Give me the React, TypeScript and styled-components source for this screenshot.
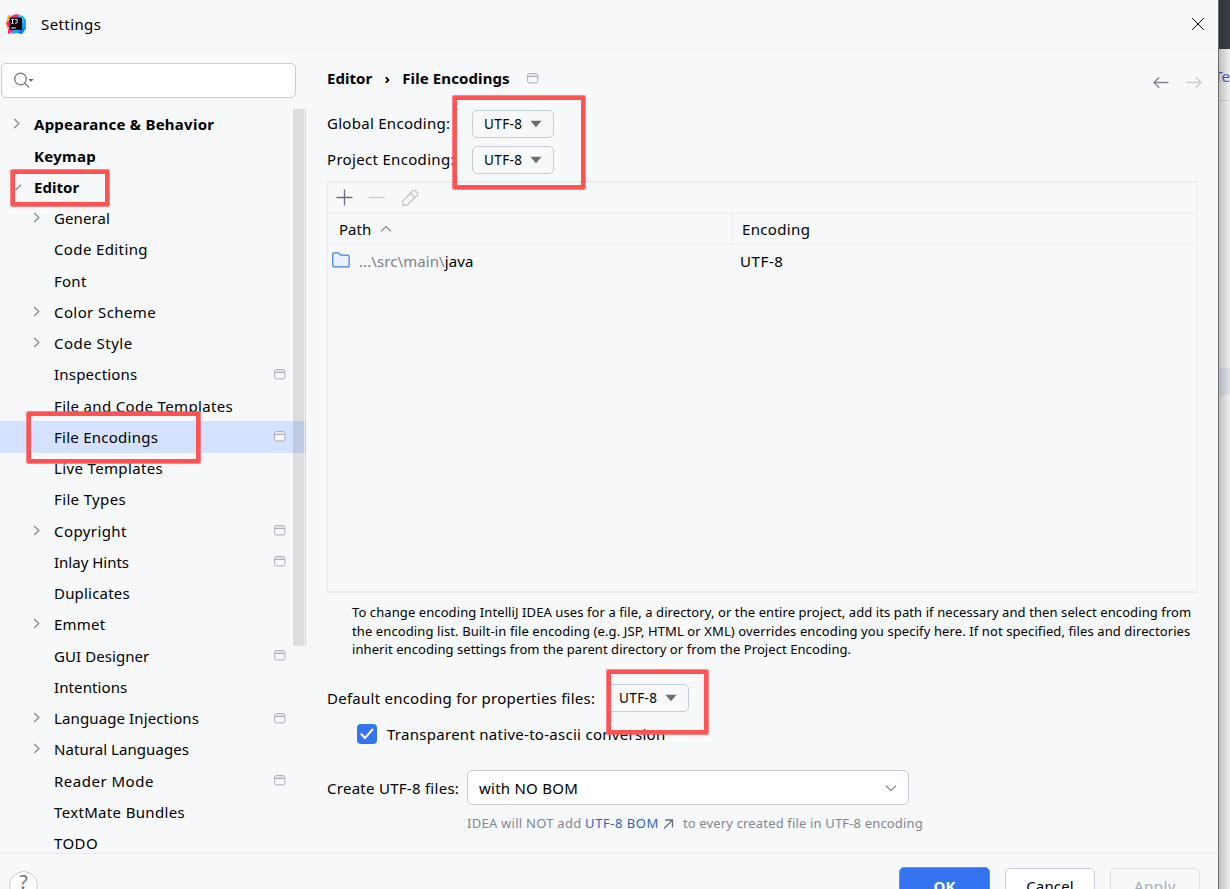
import React from 'react';
import styled, { createGlobalStyle } from 'styled-components';

const GlobalStyle = createGlobalStyle`
  *, *::before, *::after { box-sizing: border-box; }
  body { margin: 0; overflow: hidden; background: #f2f2f2; }
`;

const Screen = styled.div`
  position: relative;
  display: flex;
  width: 1230px;
  height: 889px;
  overflow: hidden;
  font-family: 'Noto Sans', 'Open Sans', sans-serif;
  font-size: 15px;
  color: #000;
`;

const Dialog = styled.div`
  display: flex;
  flex-direction: column;
  width: 1219px;
  height: 889px;
  flex: none;
  background: #f7f8fa;
  border-right: 1px solid #6c6d6f;
`;

const Text = styled.span<{ $size?: number; $ls?: number; $bold?: boolean; $color?: string }>`
  font-size: ${(p) => p.$size ?? 15}px;
  letter-spacing: ${(p) => p.$ls ?? 0}px;
  font-weight: ${(p) => (p.$bold ? 700 : 400)};
  color: ${(p) => p.$color ?? '#000'};
  line-height: 20px;
  white-space: pre;
`;

const TitleBar = styled.header`
  display: flex;
  align-items: center;
  height: 50px;
  flex: none;
  padding: 0 13px 2px 6px;
  border-bottom: 1px solid #ebecf0;
`;

const TitleText = styled.div`
  flex: 1;
  padding-left: 15px;
`;

const Body = styled.div`
  display: flex;
  height: 803px;
  flex: none;
`;

const Sidebar = styled.aside`
  display: flex;
  flex-direction: column;
  width: 306px;
  flex: none;
  padding-top: 13px;
`;

const SearchBox = styled.div`
  display: flex;
  align-items: center;
  width: 295px;
  height: 35px;
  margin-left: 1px;
  padding: 0 0 1px 12px;
  flex: none;
  background: #fff;
  border: 1px solid #c9ccd6;
  border-radius: 5px;
`;

const TreeArea = styled.div`
  position: relative;
  height: 744px;
  margin-top: 11px;
  overflow: hidden;
`;

const TreeList = styled.div`
  margin-top: -0.2px;
`;

const TreeRow = styled.div<{ $level: number; $selected?: boolean }>`
  display: flex;
  align-items: center;
  height: 31.25px;
  padding: 0 20px 0 ${(p) => 10 + p.$level * 20}px;
  background: ${(p) => (p.$selected ? '#d4e2ff' : 'transparent')};
`;

const Arrow = styled.span`
  display: flex;
  width: 24px;
  flex: none;
`;

const Grow = styled.span`
  flex: 1;
  display: flex;
`;

const ScrollThumb = styled.div`
  position: absolute;
  top: 0;
  right: 0;
  width: 13px;
  height: 537px;
  background: rgba(115, 115, 115, 0.2);
  border-right: 1px solid rgba(90, 90, 90, 0.04);
  box-shadow: inset -1px 0 0 rgba(255, 255, 255, 0.6);
`;

const Content = styled.main`
  display: flex;
  flex-direction: column;
  width: 912px;
  padding: 13px 21px 0 21px;
`;

const Breadcrumb = styled.div`
  display: flex;
  align-items: center;
  height: 32px;
  margin-bottom: 11px;
  flex: none;
`;

const Crumbs = styled.div`
  display: flex;
  align-items: center;
  flex: 1;
  padding-bottom: 2px;
`;

const CrumbIcon = styled.span`
  display: flex;
  padding: 1px 0 0 17px;
`;

const CrumbSeparator = styled.span`
  width: 30px;
  text-align: center;
`;

const NavArrows = styled.div`
  display: flex;
  gap: 17px;
  padding: 6px 0 0;
  margin-right: -5px;
`;

const FieldRow = styled.div<{ $height: number; $indent?: number; $gap?: number }>`
  display: flex;
  align-items: center;
  height: ${(p) => p.$height}px;
  margin-top: ${(p) => p.$gap ?? 0}px;
  padding-left: ${(p) => p.$indent ?? 0}px;
  flex: none;
`;

const FieldLabel = styled.div<{ $width: number; $raise?: number }>`
  width: ${(p) => p.$width}px;
  padding-bottom: ${(p) => p.$raise ?? 0}px;
  flex: none;
`;

const SmallSelect = styled.div`
  display: flex;
  align-items: center;
  gap: 8px;
  width: 81.5px;
  height: 28px;
  padding-left: 11px;
  border: 1px solid #c9ccd6;
  border-radius: 5px;
`;

const TablePanel = styled.section`
  display: flex;
  flex-direction: column;
  width: 871px;
  height: 412px;
  margin-top: 3px;
  flex: none;
  border: 1px solid #ebecf0;
  border-width: 2px 1px;
`;

const TableToolbar = styled.div`
  display: flex;
  align-items: center;
  gap: 16px;
  height: 31px;
  padding: 0 0 2px 8px;
  border-bottom: 1px solid #ebecf0;
`;

const TableHead = styled.div`
  display: flex;
  height: 31px;
  border-bottom: 1px solid #ebecf0;
`;

const HeadCell = styled.div<{ $width?: number; $pad: number }>`
  display: flex;
  align-items: center;
  gap: 9px;
  width: ${(p) => (p.$width ? p.$width + 'px' : 'auto')};
  padding-left: ${(p) => p.$pad}px;
  border-right: ${(p) => (p.$width ? '1px solid #ebecf0' : '0')};
`;

const TableRow = styled.div`
  display: flex;
  align-items: center;
  height: 31px;
  padding-left: 4px;
`;

const PathCell = styled.div`
  display: flex;
  align-items: center;
  width: 408px;
`;

const PathText = styled.div`
  display: flex;
  padding-left: 9px;
`;

const Help = styled.div`
  display: flex;
  flex-direction: column;
  padding: 10px 0 0 25px;
  height: 84px;
  flex: none;
`;

const HelpLine = styled.div`
  height: 18.4px;
  display: flex;
  align-items: center;
`;

const CheckBox = styled.div`
  display: flex;
  align-items: center;
  justify-content: center;
  width: 20px;
  height: 20px;
  margin-right: 10px;
  background: #3574f0;
  border-radius: 4px;
`;

const Combo = styled.div`
  display: flex;
  align-items: center;
  justify-content: space-between;
  width: 441.5px;
  height: 35px;
  margin-bottom: 1px;
  padding: 1px 11px 0;
  background: #fff;
  border: 1px solid #c9ccd6;
  border-radius: 5px;
`;

const Hint = styled.div`
  display: flex;
  align-items: center;
  height: 24px;
  padding-left: 140px;
  flex: none;
`;

const HintIcon = styled.span`
  display: flex;
  width: 24px;
  padding: 1px 0 0 4px;
`;

const Footer = styled.footer`
  display: flex;
  align-items: flex-start;
  gap: 15px;
  height: 60px;
  flex: none;
  padding: 13px 18px 0 9px;
  border-top: 1px solid #ebecf0;
`;

const HelpButton = styled.div`
  display: flex;
  justify-content: center;
  width: 29px;
  height: 29px;
  margin-top: 4px;
  background: #fff;
  border: 1px solid #c9ccd6;
  border-radius: 50%;
`;

const Button = styled.div<{ $kind: 'primary' | 'plain' | 'disabled' }>`
  display: flex;
  align-items: center;
  justify-content: center;
  width: ${(p) => (p.$kind === 'primary' ? 91 : 90)}px;
  height: ${(p) => (p.$kind === 'primary' ? 37 : 35)}px;
  margin-top: ${(p) => (p.$kind === 'primary' ? 0 : 1)}px;
  border-radius: 5px;
  background: ${(p) => ({ primary: '#3574f0', plain: '#fff', disabled: 'transparent' })[p.$kind]};
  border: 1px solid ${(p) => ({ primary: '#5c8ef3', plain: '#c9ccd6', disabled: '#dfe1e5' })[p.$kind]};
`;

const Backdrop = styled.div`
  position: relative;
  display: flex;
  flex-direction: column;
  width: 11px;
  overflow: hidden;
  background: #f5f5f5;
  &::after {
    content: '';
    position: absolute;
    inset: 0;
    background: linear-gradient(to right, rgba(0, 0, 0, 0.22), rgba(0, 0, 0, 0.02));
  }
`;

const BackdropBlock = styled.div<{ $height: number; $color: string }>`
  height: ${(p) => p.$height}px;
  flex: none;
  background: ${(p) => p.$color};
`;

const BackdropTab = styled.div`
  display: flex;
  align-items: center;
  justify-content: flex-end;
  height: 52px;
  padding-top: 3px;
  flex: none;
  border-bottom: 1px solid #d8dae0;
`;

const Highlight = styled.div<{ $x: number; $y: number; $w: number; $h: number }>`
  position: absolute;
  left: ${(p) => p.$x}px;
  top: ${(p) => p.$y}px;
  width: ${(p) => p.$w}px;
  height: ${(p) => p.$h}px;
  border: 4px solid #ff5252;
  border-radius: 1px;
  box-shadow: 0 0 0 1px rgba(255, 82, 82, 0.7);
`;

const Chevron = ({ dir = 'right' }: { dir?: 'right' | 'down' | 'up' }) => {
  const d = { right: 'M4.2 1 8.9 5.5 4.2 10', down: 'M1 3.8 6 8.6 11 3.8', up: 'M1 8.4 6 3.6 11 8.4' }[dir];
  return (
    <svg width="12" height="12" viewBox="0 0 12 12" fill="none" stroke="#818594" strokeWidth="1.2">
      <path d={d} />
    </svg>
  );
};

const ProjectIcon = () => (
  <svg width="12" height="11" viewBox="0 0 12 11" fill="none">
    <rect x="0.6" y="0.6" width="10.3" height="9.3" rx="1.6" fill="#f7f8fa" stroke="#a8adbd" />
    <path d="M1.1 2.2h9.300" stroke="#dfe1e8" strokeWidth="1.8" />
    <path d="M1 3.5h9.5" stroke="#a8adbd" />
  </svg>
);

const AppLogo = () => (
  <svg width="20" height="20" viewBox="0 0 20 20">
    <path d="M1 5 2 1l5 1 2 5-4 6-4 2-1-5z" fill="#ffa84a" />
    <path d="M7 1l5-1 2 5-6 4-5-4z" fill="#f5267f" />
    <path d="M0 9l4-3 4 7-1 5-5 2 0-4 1-2z" fill="#ff2d7a" />
    <path d="M12 1l5 1 3 4v9l-4 5-5-1-5 1 1-5 6-5z" fill="#16a5f5" />
    <path d="M13 0l4 3 1 6-4-2z" fill="#35c4f4" />
    <path d="M15 16l4-4-3 8-4-1z" fill="#1573e6" />
    <path d="M3.6 3.6h12.4v12.4H3.6z" fill="#0b0309" />
    <path d="M5.2 5.5h2.6M6.5 5.5v3.6M5.2 9.2h2.6M9 5.5h2.2v2.6q0 1.1-1.2 1.1H9" stroke="#fff" strokeWidth="0.9" fill="none" />
    <path d="M5.2 14h4.4" stroke="#fff" strokeWidth="1" />
  </svg>
);

const CloseIcon = () => (
  <svg width="14" height="14" viewBox="0 0 14 14" stroke="#000" strokeWidth="1">
    <path d="M1.2 1.2l11.6 11.6M12.8 1.2l-11.6 11.6" />
  </svg>
);

const SearchIcon = () => (
  <svg width="22" height="18" viewBox="0 0 22 18" fill="none" stroke="#6c707e" strokeWidth="1.2">
    <circle cx="6.5" cy="8" r="5.8" />
    <path d="M10.7 12.2 15 16.5" />
    <path d="M14.3 8h5.4L17 11z" fill="#6c707e" stroke="none" />
  </svg>
);

const Triangle = () => (
  <svg width="12" height="8" viewBox="0 0 12 8">
    <path d="M.4.8h11.2L6 7.2z" fill="#6e6e6e" />
  </svg>
);

const NavArrow = ({ forward }: { forward?: boolean }) => (
  <svg width="16" height="13" viewBox="0 0 16 13" fill="none" strokeWidth="1.3" stroke={forward ? '#c8c9ce' : '#818594'}>
    <path d={forward ? 'M.5 6.5H15M9.8 1.3 15 6.5 9.8 11.7' : 'M15.5 6.5H1M6.2 1.3 1 6.5l5.2 5.2'} />
  </svg>
);

const PlusIcon = () => (
  <svg width="17" height="17" viewBox="0 0 17 17" stroke="#6c707e" strokeWidth="1.3">
    <path d="M.5 8.5h16M8.5.5v16" />
  </svg>
);

const MinusIcon = () => (
  <svg width="16" height="17" viewBox="0 0 16 17" stroke="#c9cacf" strokeWidth="1.3">
    <path d="M0 8.5h16" />
  </svg>
);

const PencilIcon = () => (
  <svg width="18" height="17" viewBox="-1 0 18 17" fill="none" stroke="#bcbdc3" strokeWidth="1.2" strokeLinejoin="round">
    <path d="M.8 16.2v-4.4L11 1.6q1.1-1.1 2.2 0L15.4 3.8q1.1 1.1 0 2.2L5.2 16.2zM8.4 4.2l4.4 4.4" />
  </svg>
);

const FolderIcon = () => (
  <svg width="18" height="17" viewBox="0 0 18 17">
    <path
      d="M.7 13V2.6Q.7.8 2.4.8h3.4q.6 0 1 .4L9 3.2h6.3q1.9 0 1.9 1.8v8q0 1.9-1.9 1.9H2.6Q.7 14.9 .7 13z"
      fill="#e9f0ff"
      stroke="#3f7bf1"
      strokeWidth="1.2"
    />
  </svg>
);

const CheckIcon = () => (
  <svg width="14" height="12" viewBox="0 0 14 12" fill="none" stroke="#fff" strokeWidth="2.1" strokeLinecap="round">
    <path d="M1.4 6.2 5 10 12.4 1.6" />
  </svg>
);

const ExternalIcon = () => (
  <svg width="11" height="10" viewBox="0 0 11 10" fill="none" stroke="#6c707e" strokeWidth="1.3">
    <path d="M2 1h7.5v7.5M9.5 1 1 9.5" />
  </svg>
);

type Item = { name: string; level: number; arrow?: 'right' | 'down'; project?: boolean; ls?: number };

const tree: Item[] = [
  { name: 'Appearance & Behavior', level: 0, arrow: 'right', ls: 0.25 },
  { name: 'Keymap', level: 0, ls: 0.3 },
  { name: 'Editor', level: 0, arrow: 'down', ls: 0.05 },
  { name: 'General', level: 1, arrow: 'right', ls: 0.1 },
  { name: 'Code Editing', level: 1, ls: 0.38 },
  { name: 'Font', level: 1, ls: 0.25 },
  { name: 'Color Scheme', level: 1, arrow: 'right', ls: 0.4 },
  { name: 'Code Style', level: 1, arrow: 'right', ls: 0.48 },
  { name: 'Inspections', level: 1, project: true, ls: 0.2 },
  { name: 'File and Code Templates', level: 1, ls: 0.34 },
  { name: 'File Encodings', level: 1, project: true, ls: 0.26 },
  { name: 'Live Templates', level: 1, ls: 0.36 },
  { name: 'File Types', level: 1, ls: 0.36 },
  { name: 'Copyright', level: 1, arrow: 'right', project: true, ls: 0.42 },
  { name: 'Inlay Hints', level: 1, project: true },
  { name: 'Duplicates', level: 1, ls: 0.2 },
  { name: 'Emmet', level: 1, arrow: 'right', ls: 0.2 },
  { name: 'GUI Designer', level: 1, project: true, ls: 0.07 },
  { name: 'Intentions', level: 1, ls: 0.1 },
  { name: 'Language Injections', level: 1, arrow: 'right', project: true, ls: 0.12 },
  { name: 'Natural Languages', level: 1, arrow: 'right', ls: 0.06 },
  { name: 'Reader Mode', level: 1, project: true, ls: 0.5 },
  { name: 'TextMate Bundles', level: 1, ls: 0.34 },
  { name: 'TODO', level: 1, ls: 0.4 },
];

const helpLines = [
  { text: 'To change encoding IntelliJ IDEA uses for a file, a directory, or the entire project, add its path if necessary and then select encoding from', ls: 0.09 },
  { text: 'the encoding list. Built-in file encoding (e.g. JSP, HTML or XML) overrides encoding you specify here. If not specified, files and directories', ls: 0.105 },
  { text: 'inherit encoding settings from the parent directory or from the Project Encoding.', ls: 0.075 },
];

const marks = [
  { x: 11, y: 170, w: 98, h: 36 },
  { x: 27, y: 412, w: 173, h: 51 },
  { x: 453, y: 96, w: 132, h: 93 },
  { x: 607, y: 670, w: 101, h: 64 },
];

const EncodingSelect = () => (
  <SmallSelect>
    <Text $size={13.5} $ls={0.38}>UTF-8</Text>
    <Triangle />
  </SmallSelect>
);

export default function App() {
  return (
    <Screen>
      <GlobalStyle />
      <Dialog>
        <TitleBar>
          <AppLogo />
          <TitleText>
            <Text $ls={0.4}>Settings</Text>
          </TitleText>
          <CloseIcon />
        </TitleBar>
        <Body>
          <Sidebar>
            <SearchBox>
              <SearchIcon />
            </SearchBox>
            <TreeArea>
              <TreeList>
                {tree.map((item) => (
                  <TreeRow key={item.name} $level={item.level} $selected={item.name === 'File Encodings'}>
                    <Arrow>{item.arrow && <Chevron dir={item.arrow} />}</Arrow>
                    <Grow>
                      <Text $bold={item.level === 0} $ls={item.ls}>{item.name}</Text>
                    </Grow>
                    {item.project && <ProjectIcon />}
                  </TreeRow>
                ))}
              </TreeList>
              <ScrollThumb />
            </TreeArea>
          </Sidebar>
          <Content>
            <Breadcrumb>
              <Crumbs>
                <Text $bold $ls={0.05}>Editor</Text>
                <CrumbSeparator>
                  <Text $bold>›</Text>
                </CrumbSeparator>
                <Text $bold $ls={0.1}>File Encodings</Text>
                <CrumbIcon>
                  <ProjectIcon />
                </CrumbIcon>
              </Crumbs>
              <NavArrows>
                <NavArrow />
                <NavArrow forward />
              </NavArrows>
            </Breadcrumb>
            <FieldRow $height={36}>
              <FieldLabel $width={145} $raise={2}>
                <Text $ls={0.28}>Global Encoding:</Text>
              </FieldLabel>
              <EncodingSelect />
            </FieldRow>
            <FieldRow $height={36}>
              <FieldLabel $width={145} $raise={2}>
                <Text $ls={0.32}>Project Encoding:</Text>
              </FieldLabel>
              <EncodingSelect />
            </FieldRow>
            <TablePanel>
              <TableToolbar>
                <PlusIcon />
                <MinusIcon />
                <PencilIcon />
              </TableToolbar>
              <TableHead>
                <HeadCell $width={405} $pad={11}>
                  <Text>Path</Text>
                  <Chevron dir="up" />
                </HeadCell>
                <HeadCell $pad={9}>
                  <Text $ls={0.35}>Encoding</Text>
                </HeadCell>
              </TableHead>
              <TableRow>
                <PathCell>
                  <FolderIcon />
                  <PathText>
                    <Text $color="#808080" $ls={0.08}>...\src\main\</Text>
                    <Text $ls={0.1}>java</Text>
                  </PathText>
                </PathCell>
                <Text $ls={0.6}>UTF-8</Text>
              </TableRow>
            </TablePanel>
            <Help>
              {helpLines.map((line) => (
                <HelpLine key={line.text}>
                  <Text $size={13} $ls={line.ls}>{line.text}</Text>
                </HelpLine>
              ))}
            </Help>
            <FieldRow $height={42}>
              <FieldLabel $width={280}>
                <Text $ls={0.25}>Default encoding for properties files:</Text>
              </FieldLabel>
              <EncodingSelect />
            </FieldRow>
            <FieldRow $height={30} $indent={30}>
              <CheckBox>
                <CheckIcon />
              </CheckBox>
              <Text $ls={0.28}>Transparent native-to-ascii conversion</Text>
            </FieldRow>
            <FieldRow $height={46} $gap={16}>
              <FieldLabel $width={140}>
                <Text $ls={0.27}>Create UTF-8 files:</Text>
              </FieldLabel>
              <Combo>
                <Text $ls={0.24}>with NO BOM</Text>
                <Chevron dir="down" />
              </Combo>
            </FieldRow>
            <Hint>
              <Text $size={13} $ls={0.26} $color="#818594">IDEA will NOT add </Text>
              <Text $size={13} $ls={0.55} $color="#315fbd">UTF-8 BOM</Text>
              <HintIcon>
                <ExternalIcon />
              </HintIcon>
              <Text $size={13} $ls={0.16} $color="#818594">to every created file in UTF-8 encoding</Text>
            </Hint>
          </Content>
        </Body>
        <Footer>
          <HelpButton>
            <Text $size={19} $color="#6c707e">?</Text>
          </HelpButton>
          <Grow />
          <Button $kind="primary">
            <Text $bold $color="#fff">OK</Text>
          </Button>
          <Button $kind="plain">
            <Text $ls={0.15}>Cancel</Text>
          </Button>
          <Button $kind="disabled">
            <Text $color="#a8adbd" $ls={0.5}>Apply</Text>
          </Button>
        </Footer>
      </Dialog>
      <Backdrop>
        <BackdropBlock $height={49} $color="#3c3f47" />
        <BackdropTab>
          <Text $color="#4a5fd0">Te</Text>
        </BackdropTab>
        <BackdropBlock $height={267} $color="#f5f5f5" />
        <BackdropBlock $height={27} $color="#e3e7f0" />
      </Backdrop>
      {marks.map((m) => (
        <Highlight key={m.y} $x={m.x} $y={m.y} $w={m.w} $h={m.h} />
      ))}
    </Screen>
  );
}
